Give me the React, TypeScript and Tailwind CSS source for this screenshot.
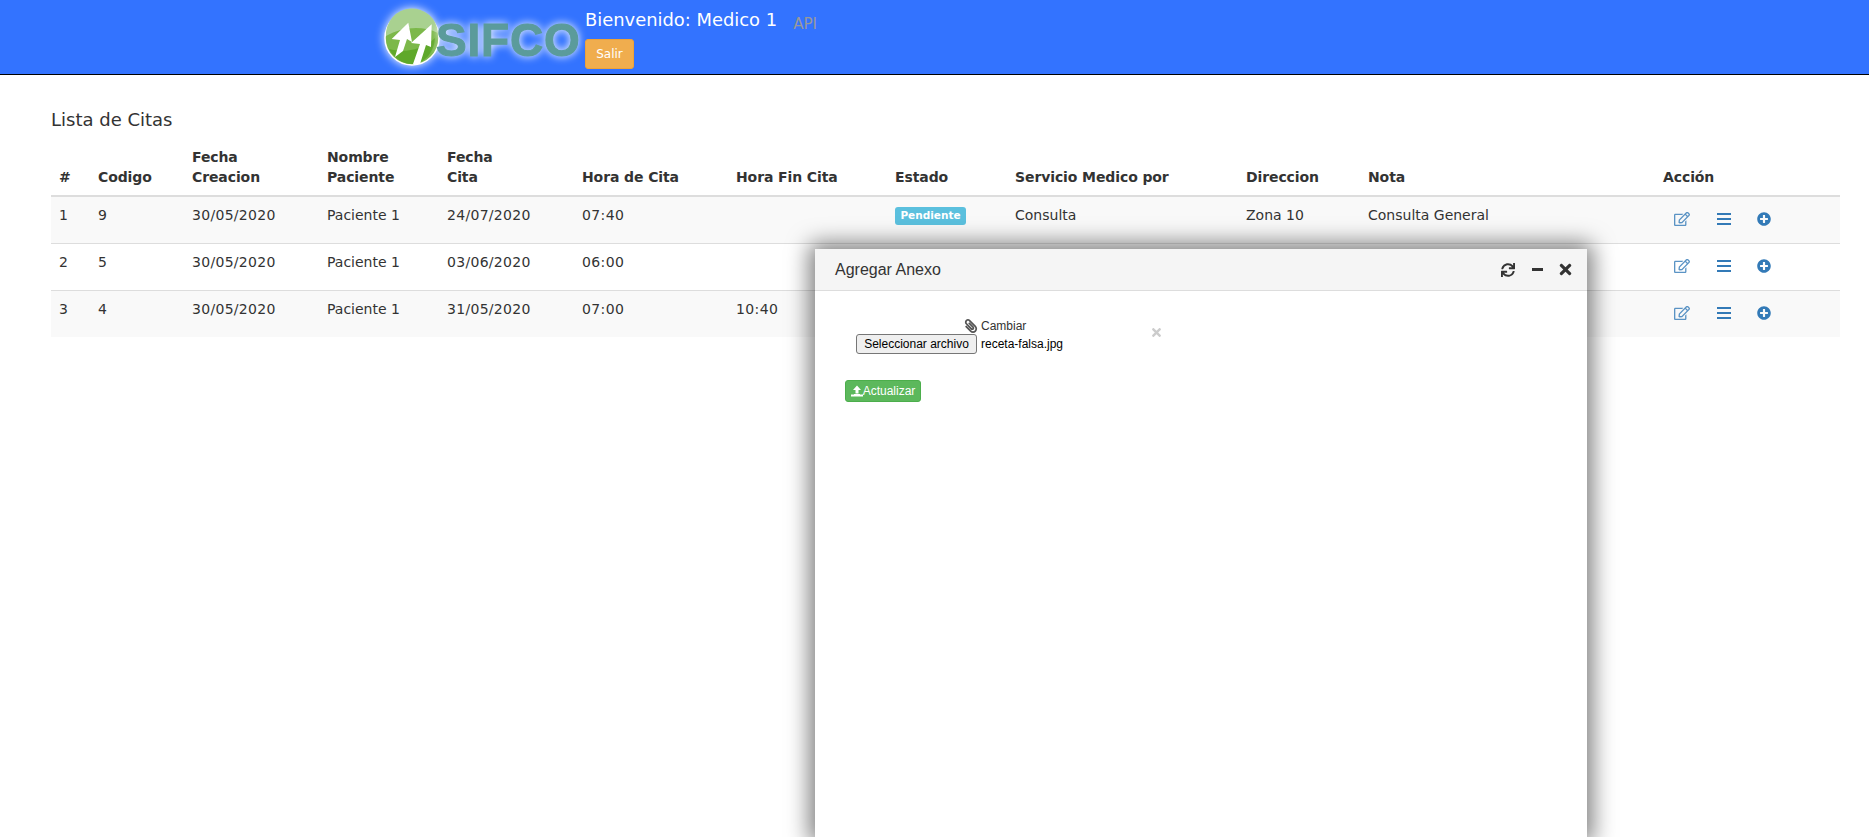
import React from "react";
import { FaPaperclip, FaPlusCircle, FaRegEdit, FaSync, FaTimes } from "react-icons/fa";

interface Cita {
  num: number;
  codigo: number;
  creacion: string;
  paciente: string;
  fecha: string;
  hora: string;
  horaFin: string;
  estado?: string;
  servicio?: string;
  direccion?: string;
  nota?: string;
}

const citas: Cita[] = [
  {
    num: 1,
    codigo: 9,
    creacion: "30/05/2020",
    paciente: "Paciente 1",
    fecha: "24/07/2020",
    hora: "07:40",
    horaFin: "",
    estado: "Pendiente",
    servicio: "Consulta",
    direccion: "Zona 10",
    nota: "Consulta General",
  },
  { num: 2, codigo: 5, creacion: "30/05/2020", paciente: "Paciente 1", fecha: "03/06/2020", hora: "06:00", horaFin: "" },
  { num: 3, codigo: 4, creacion: "30/05/2020", paciente: "Paciente 1", fecha: "31/05/2020", hora: "07:00", horaFin: "10:40" },
];

function Logo() {
  return (
    <div className="flex w-[202px] items-center">
      <svg width="62" height="62" viewBox="0 0 62 62" className="shrink-0 drop-shadow-[0_0_5px_#ffffff]">
        <circle cx="29" cy="31" r="27" fill="#7cb84a" stroke="#ffffff" strokeWidth="1.5" />
        <path d="M3 29a26 26 0 0 1 52-3c-16-8-36-6-52 3z" fill="#a9d190" />
        <path d="M6 42c14 4 32 2 46-11-1 15-11 26-23 26-9 0-18-6-23-15z" fill="#5fa82a" />
        <path d="M25.3 15.7 8.7 32l8.3 1-5 17 8-6 4-12 5 3z" fill="#ffffff" />
        <path d="M48.7 17.3 28 36l9 1-7 20h7l6-19 5 2z" fill="#ffffff" />
      </svg>
      <span className="-ml-[9px] pt-[4px] font-['Liberation_Sans',sans-serif] text-[46px] leading-none font-bold tracking-[0.8px] text-[#5b9b9b] drop-shadow-[0_0_4px_#ffffff] [-webkit-text-stroke:1px_#5b9b9b]">
        SIFCO
      </span>
    </div>
  );
}

function Header() {
  return (
    <header className="flex h-[75px] border-b border-black bg-[#3373ff] pl-[383px] font-['DejaVu_Sans',sans-serif]">
      <div className="flex h-[74px] items-center pt-[1px]">
        <Logo />
      </div>
      <div className="flex flex-col items-start pt-[8px]">
        <span className="text-[17.9px] leading-[24px] text-white">Bienvenido: Medico 1</span>
        <button type="button" className="mt-[7px] h-[30px] w-[49px] rounded-[3px] border border-[#eea236] bg-[#f0ad4e] text-[12px] text-white">
          Salir
        </button>
      </div>
      <span className="pt-[14px] pl-[16px] text-[15px] leading-[20px] text-[#999999]">API</span>
    </header>
  );
}

function Acciones() {
  return (
    <div className="flex items-center pl-[11px] text-[#337ab7]">
      <FaRegEdit className="w-[16px] text-[16px] opacity-80" />
      <span className="ml-[27px] flex w-[14px] flex-col gap-[3px]">
        <i className="h-[2px] bg-[#337ab7]" />
        <i className="h-[2px] bg-[#337ab7]" />
        <i className="h-[2px] bg-[#337ab7]" />
      </span>
      <FaPlusCircle className="ml-[26px] text-[14px]" />
    </div>
  );
}

function Tabla() {
  return (
    <table className="w-[1789px] table-fixed border-collapse text-[14px] leading-[20px] text-[#333333]">
      <colgroup>
        <col className="w-[39px]" />
        <col className="w-[94px]" />
        <col className="w-[135px]" />
        <col className="w-[120px]" />
        <col className="w-[135px]" />
        <col className="w-[154px]" />
        <col className="w-[159px]" />
        <col className="w-[120px]" />
        <col className="w-[231px]" />
        <col className="w-[122px]" />
        <col className="w-[295px]" />
        <col />
      </colgroup>
      <thead>
        <tr className="border-b-2 border-[#dddddd] align-bottom font-bold">
          {["#", "Codigo", "Fecha Creacion", "Nombre Paciente", "Fecha Cita", "Hora de Cita", "Hora Fin Cita", "Estado", "Servicio Medico por", "Direccion", "Nota", "Acción"].map((h) => (
            <th key={h} className="px-[8px] pb-[8px] text-left font-bold tracking-[-0.1px]">
              {h === "Fecha Creacion" || h === "Nombre Paciente" || h === "Fecha Cita" ? (
                <>
                  {h.split(" ")[0]}
                  <br />
                  {h.split(" ")[1]}
                </>
              ) : (
                h
              )}
            </th>
          ))}
        </tr>
      </thead>
      <tbody>
        {citas.map((c) => (
          <tr key={c.num} className={`h-[47px] border-t border-[#dddddd] align-top first:border-t-0 ${c.num % 2 === 1 ? "bg-[#f9f9f9]" : "bg-white"}`}>
            <td className="px-[8px] pt-[8px]">{c.num}</td>
            <td className="px-[8px] pt-[8px]">{c.codigo}</td>
            <td className="px-[8px] pt-[8px] tracking-[0.3px]">{c.creacion}</td>
            <td className="px-[8px] pt-[8px]">{c.paciente}</td>
            <td className="px-[8px] pt-[8px] tracking-[0.3px]">{c.fecha}</td>
            <td className="px-[8px] pt-[8px] tracking-[0.4px]">{c.hora}</td>
            <td className="px-[8px] pt-[8px] tracking-[0.4px]">{c.horaFin}</td>
            <td className="px-[8px] pt-[10px]">
              {c.estado && (
                <span className="block w-[71px] rounded-[3px] bg-[#5bc0de] pt-[2px] pb-[3px] text-center text-[10.5px] leading-[13px] font-bold text-white">
                  {c.estado}
                </span>
              )}
            </td>
            <td className="px-[8px] pt-[8px]">{c.servicio}</td>
            <td className="px-[8px] pt-[8px]">{c.direccion}</td>
            <td className="px-[8px] pt-[8px]">{c.nota}</td>
            <td className="px-[8px] pt-[14px]">
              <Acciones />
            </td>
          </tr>
        ))}
      </tbody>
    </table>
  );
}

function ModalAnexo() {
  return (
    <div className="absolute top-[249px] left-[815px] h-[588px] w-[772px] rounded-t-[3px] bg-white font-['Liberation_Sans',sans-serif] shadow-[0_0_22px_6px_rgba(0,0,0,0.5)]">
      <div className="flex h-[42px] items-center border-b border-[#dddddd] bg-[#f5f5f5] pr-[13px] pl-[20px]">
        <span className="flex-1 text-[16px] text-[#333333]">Agregar Anexo</span>
        <FaSync className="text-[14px] text-[#333333]" />
        <span className="ml-[17px] h-[3px] w-[11px] bg-[#333333]" />
        <FaTimes className="ml-[14px] text-[17px] text-[#333333]" />
      </div>
      <div className="pt-[27px] pl-[41px]">
        <div className="flex h-[32px] w-[340px] items-start">
          <div className="w-[298px]">
            <div className="flex h-[16px] items-center pl-[108px] text-[12px] leading-[16px] text-[#333333]">
              <FaPaperclip className="mr-[3px] -scale-x-100 text-[14px] text-[#555555]" />
              Cambiar
            </div>
            <div className="flex items-center text-[12px] text-black">
              <button type="button" className="h-[20px] w-[121px] rounded-[3px] border border-[#767676] bg-[#efefef] text-[12px] leading-none">
                Seleccionar archivo
              </button>
              <span className="ml-[4px]">receta-falsa.jpg</span>
            </div>
          </div>
          <FaTimes className="mt-[8px] -ml-[4px] text-[13px] text-[#cccccc]" />
        </div>
        <button type="button" className="mt-[30px] -ml-[11px] flex h-[22px] w-[76px] items-center justify-center rounded-[3px] border border-[#4cae4c] bg-[#5cb85c] text-[12px] text-white">
          <svg width="12" height="12" viewBox="0 0 12 11" fill="#ffffff">
            <path d="M6 0 10 4.5H7.5V8h-3V4.5H2zM0 9h3v-.5h6V9h3v2H0z" />
          </svg>
          Actualizar
        </button>
      </div>
    </div>
  );
}

export default function App() {
  return (
    <div className="relative h-[837px] overflow-hidden bg-white font-['DejaVu_Sans',sans-serif]">
      <Header />
      <main className="pt-[35px] pl-[51px]">
        <h1 className="text-[18px] leading-[20px] font-normal text-[#333333]">Lista de Citas</h1>
        <div className="mt-[17px]">
          <Tabla />
        </div>
      </main>
      <ModalAnexo />
    </div>
  );
}
